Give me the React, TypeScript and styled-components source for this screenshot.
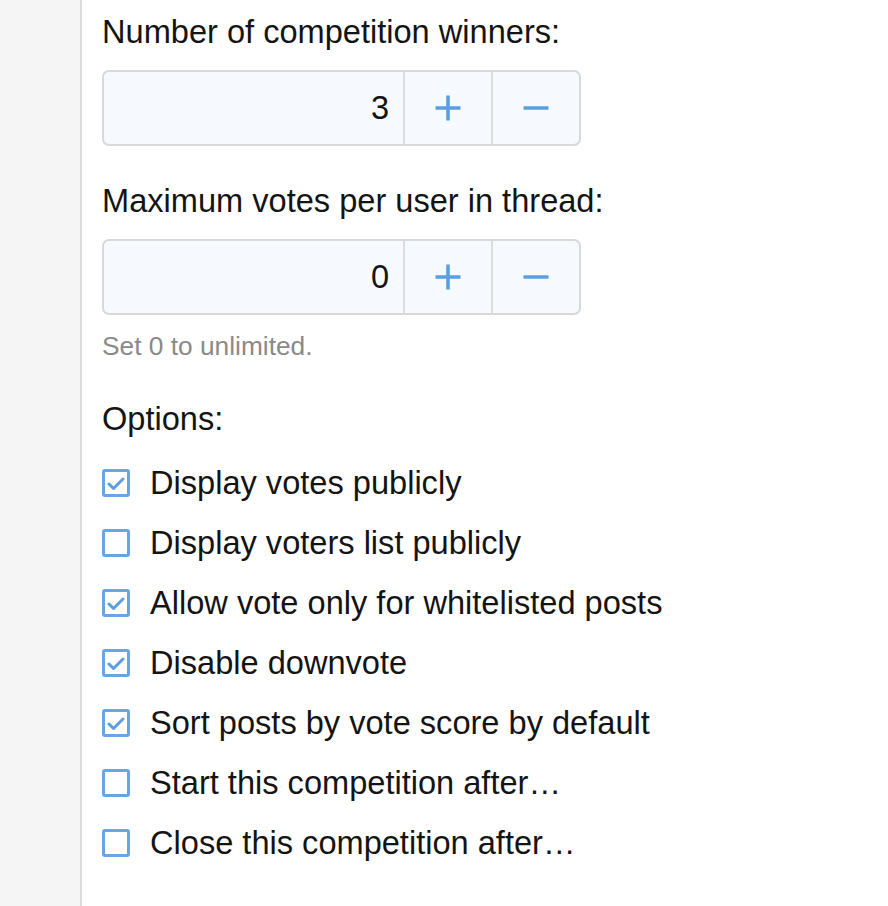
import React from "react";
import styled, { createGlobalStyle } from "styled-components";

const Global = createGlobalStyle`
  html, body { margin: 0; padding: 0; background: #fff; }
  body { font-family: "Liberation Sans", Arial, sans-serif; color: #141414; }
`;

const Page = styled.div`
  display: flex;
  min-height: 906px;
`;

const Sidebar = styled.div`
  width: 80px;
  flex: none;
  background: #f5f5f5;
  border-right: 2px solid #dcdcdc;
`;

const Content = styled.div`
  padding: 12px 0 0 20px;
  display: flex;
  flex-direction: column;
`;

const Label = styled.div<{ $top?: number }>`
  font-size: 32.6px;
  line-height: 40px;
  margin-top: ${(p) => p.$top ?? 0}px;
`;

const Spinner = styled.div`
  margin-top: 18px;
  width: 479px;
  height: 76px;
  box-sizing: border-box;
  border: 2px solid #d9d9d9;
  border-radius: 7px;
  background: #f6f9fd;
  display: flex;
  overflow: hidden;
`;

const Value = styled.div`
  flex: 1;
  display: flex;
  align-items: center;
  justify-content: flex-end;
  padding-right: 14px;
  font-size: 32.6px;
`;

const SpinButton = styled.div<{ $w: number }>`
  width: ${(p) => p.$w}px;
  flex: none;
  box-sizing: border-box;
  border-left: 2px solid #dcdcdc;
  display: flex;
  align-items: center;
  justify-content: center;
`;

const Hint = styled.div`
  margin-top: 15px;
  font-size: 26.3px;
  line-height: 32px;
  color: #8a8a8a;
`;

const Options = styled.div`
  margin-top: 14px;
  display: flex;
  flex-direction: column;
`;

const Row = styled.div`
  height: 60px;
  display: flex;
  align-items: center;
  gap: 20px;
  font-size: 32.6px;
`;

const Box = styled.div`
  width: 28px;
  height: 28px;
  box-sizing: border-box;
  border: 3px solid #66a5e6;
  border-radius: 3px;
  display: flex;
  align-items: center;
  justify-content: center;
  flex: none;
`;

const Plus = () => (
  <svg width="26" height="26" viewBox="0 0 26 26">
    <path d="M13 0.5v25M0.5 13h25" stroke="#5a9fe2" strokeWidth="3.6" fill="none" />
  </svg>
);
const Minus = () => (
  <svg width="26" height="26" viewBox="0 0 26 26">
    <path d="M0.5 13h25" stroke="#5a9fe2" strokeWidth="3.6" fill="none" />
  </svg>
);
const Check = () => (
  <svg width="18" height="15" viewBox="0 0 18 15">
    <path d="M2 8l4.5 4.5L16 3" stroke="#5a9fe2" strokeWidth="3" fill="none" strokeLinecap="round" strokeLinejoin="round" />
  </svg>
);

const NumberInput = ({ value }: { value: number }) => (
  <Spinner>
    <Value>{value}</Value>
    <SpinButton $w={88}><Plus /></SpinButton>
    <SpinButton $w={88}><Minus /></SpinButton>
  </Spinner>
);

const options: [string, boolean][] = [
  ["Display votes publicly", true],
  ["Display voters list publicly", false],
  ["Allow vote only for whitelisted posts", true],
  ["Disable downvote", true],
  ["Sort posts by vote score by default", true],
  ["Start this competition after…", false],
  ["Close this competition after…", false],
];

export default function App() {
  return (
    <Page>
      <Global />
      <Sidebar />
      <Content>
        <Label>Number of competition winners:</Label>
        <NumberInput value={3} />
        <Label $top={35}>Maximum votes per user in thread:</Label>
        <NumberInput value={0} />
        <Hint>Set 0 to unlimited.</Hint>
        <Label $top={37}>Options:</Label>
        <Options>
          {options.map(([t, c]) => (
            <Row key={t}>
              <Box>{c && <Check />}</Box>
              {t}
            </Row>
          ))}
        </Options>
      </Content>
    </Page>
  );
}
